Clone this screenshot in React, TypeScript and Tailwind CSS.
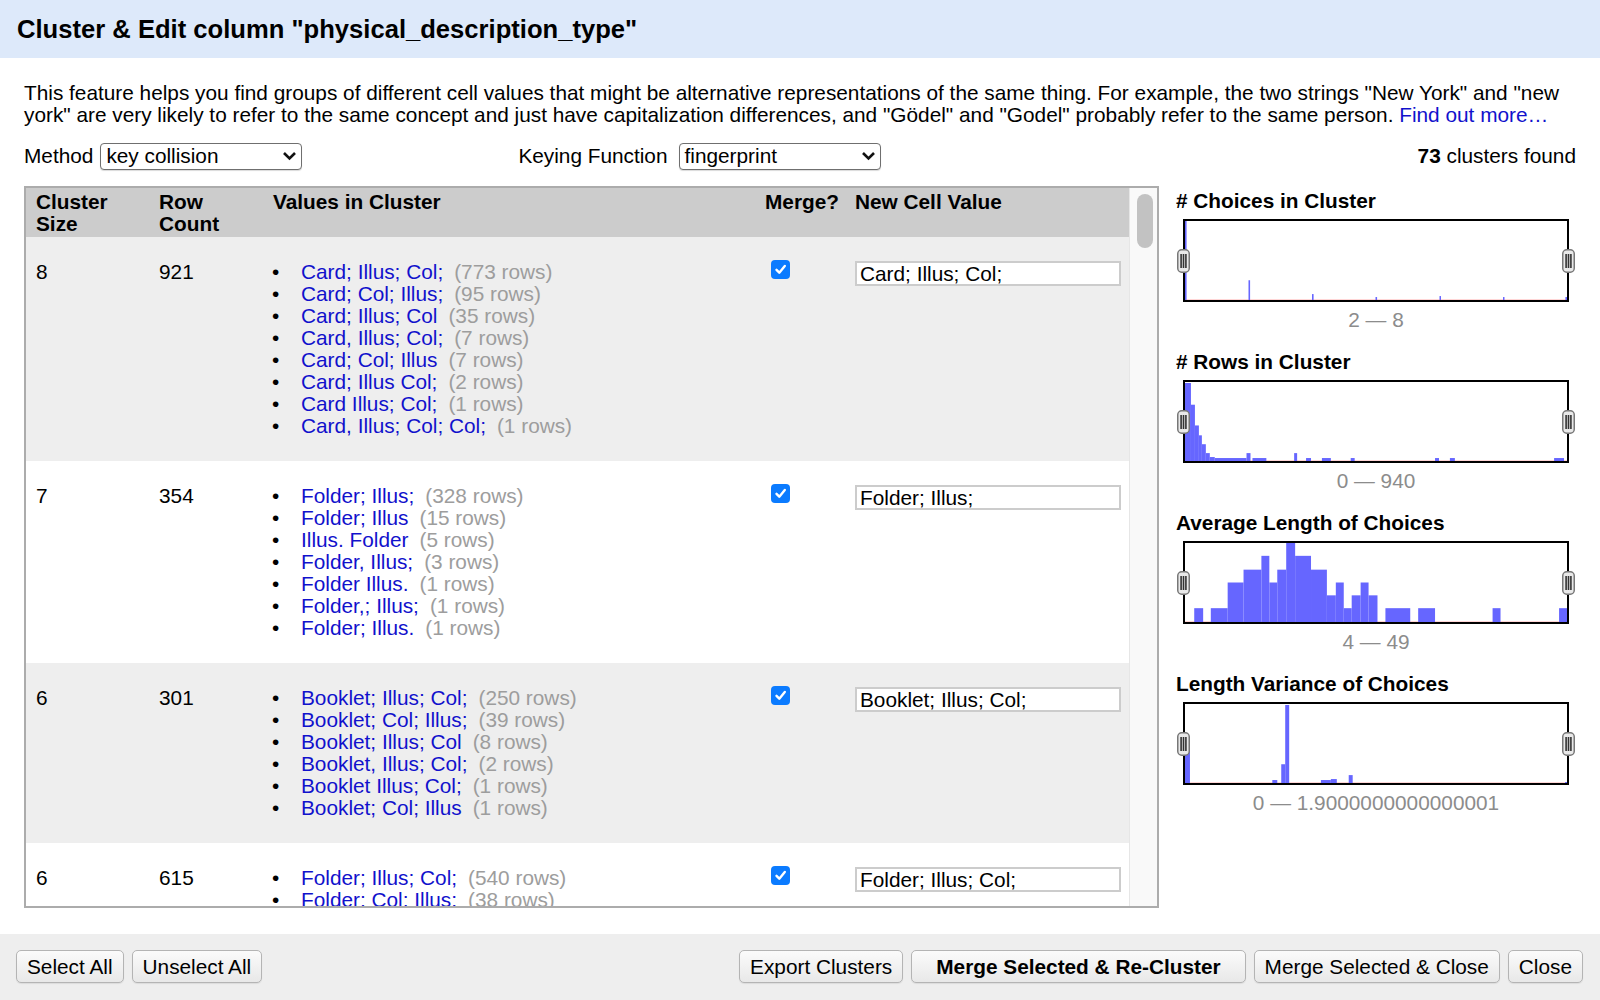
import React from "react";

type Item = [string, number];
type Cluster = { size: number; count: number; items: Item[]; value: string };

const clusters: Cluster[] = [
  {
    size: 8,
    count: 921,
    value: "Card; Illus; Col;",
    items: [
      ["Card; Illus; Col;", 773],
      ["Card; Col; Illus;", 95],
      ["Card; Illus; Col", 35],
      ["Card, Illus; Col;", 7],
      ["Card; Col; Illus", 7],
      ["Card; Illus Col;", 2],
      ["Card Illus; Col;", 1],
      ["Card, Illus; Col; Col;", 1],
    ],
  },
  {
    size: 7,
    count: 354,
    value: "Folder; Illus;",
    items: [
      ["Folder; Illus;", 328],
      ["Folder; Illus", 15],
      ["Illus. Folder", 5],
      ["Folder, Illus;", 3],
      ["Folder Illus.", 1],
      ["Folder,; Illus;", 1],
      ["Folder; Illus.", 1],
    ],
  },
  {
    size: 6,
    count: 301,
    value: "Booklet; Illus; Col;",
    items: [
      ["Booklet; Illus; Col;", 250],
      ["Booklet; Col; Illus;", 39],
      ["Booklet; Illus; Col", 8],
      ["Booklet, Illus; Col;", 2],
      ["Booklet Illus; Col;", 1],
      ["Booklet; Col; Illus", 1],
    ],
  },
  {
    size: 6,
    count: 615,
    value: "Folder; Illus; Col;",
    items: [
      ["Folder; Illus; Col;", 540],
      ["Folder; Col; Illus;", 38],
      ["Folder; Illus; Col", 20],
      ["Folder, Illus; Col;", 10],
      ["Folder; Col; Illus", 4],
      ["Folder Illus; Col;", 3],
    ],
  },
];

// bars: [x0, x1, height] in a 385 x 80 box
const charts: { title: string; range: string; bars: number[][] }[] = [
  {
    title: "# Choices in Cluster",
    range: "2 — 8",
    bars: [
      [0, 1.6, 80],
      [64, 65.6, 20],
      [128, 129.6, 6],
      [192, 193.6, 3],
      [256.5, 258, 4],
      [320.5, 322, 3],
      [383.4, 385, 3],
    ],
  },
  {
    title: "# Rows in Cluster",
    range: "0 — 940",
    bars: [
      [0, 6, 79],
      [6, 10, 57],
      [10, 14, 36],
      [14, 17, 26],
      [17, 21, 17],
      [21, 25, 8],
      [25, 30, 4],
      [30, 62, 3],
      [62, 66, 8],
      [68, 82, 3],
      [110, 113, 8],
      [122, 127, 3],
      [138, 147, 3],
      [167, 171, 3],
      [252, 256, 3],
      [267, 272, 3],
      [372, 382, 3],
    ],
  },
  {
    title: "Average Length of Choices",
    range: "4 — 49",
    bars: [
      [9.3, 18.3, 14],
      [26, 43, 14],
      [43, 59, 40],
      [59, 77, 53],
      [77, 85, 67],
      [85, 93, 40],
      [93, 102, 53],
      [102, 111, 80],
      [111, 127, 67],
      [127, 143, 53],
      [143, 152, 27],
      [152, 160, 40],
      [160, 168, 14],
      [168, 177, 27],
      [177, 185, 40],
      [185, 194, 27],
      [202, 227, 14],
      [235, 252, 14],
      [310, 318, 14],
      [377, 385, 14],
    ],
  },
  {
    title: "Length Variance of Choices",
    range: "0 — 1.9000000000000001",
    bars: [
      [0, 5, 33],
      [88, 93, 3],
      [97, 101, 19],
      [101, 105, 79],
      [137, 147, 3],
      [147, 153, 4],
      [165, 169, 8],
      [383, 385, 1],
    ],
  },
];

const Chevron = () => (
  <svg width="15" height="10" viewBox="0 0 15 10">
    <path d="M2 2l5.5 5.5L13 2" fill="none" stroke="#111" strokeWidth="2.6" />
  </svg>
);

const FakeSelect: React.FC<{ value: string }> = ({ value }) => (
  <div className="flex h-[27px] w-[202px] items-center justify-between rounded-[4px] border border-[#6f6f6f] bg-white pl-[5px] pr-[4px] shadow-[0_1px_1px_rgba(0,0,0,0.15)]">
    <span>{value}</span>
    <Chevron />
  </div>
);

const Checkbox = () => (
  <div className="flex h-[19px] w-[19px] items-center justify-center rounded-[4px] bg-[#0b7bff]">
    <svg width="13" height="13" viewBox="0 0 13 13">
      <path d="M2.5 6.8l2.8 2.9L10.8 3" fill="none" stroke="#fff" strokeWidth="2.4" strokeLinecap="round" strokeLinejoin="round" />
    </svg>
  </div>
);

const Handle = () => (
  <svg width="13" height="24" viewBox="0 0 13 24">
    <rect x="0.75" y="0.75" width="11.5" height="22.5" rx="4" fill="#e9e9e9" stroke="#777" strokeWidth="1.5" />
    <rect x="3.3" y="5" width="1.6" height="14" fill="#333" />
    <rect x="5.7" y="5" width="1.6" height="14" fill="#333" />
    <rect x="8.1" y="5" width="1.6" height="14" fill="#333" />
  </svg>
);

const Histogram: React.FC<{ bars: number[][] }> = ({ bars }) => (
  <div className="relative h-[83px] w-[386px] border-2 border-black bg-white">
    <svg width="382" height="79" viewBox="0 0 385 80" preserveAspectRatio="none" className="block">
      <rect x="0" y="79" width="385" height="1" fill="#ffd6d6" />
      {bars.map(([x0, x1, h], i) => (
        <rect key={i} x={x0} y={80 - h} width={x1 - x0} height={h} fill="#6666ff" />
      ))}
    </svg>
    <div className="absolute left-[-8px] top-[28px]">
      <Handle />
    </div>
    <div className="absolute right-[-8px] top-[28px]">
      <Handle />
    </div>
  </div>
);

const Button: React.FC<{ children: React.ReactNode; bold?: boolean }> = ({ children, bold }) => (
  <button
    className={`h-[33px] rounded-[5px] border border-[#b4b4b4] bg-[linear-gradient(#fbfbfb,#e8e8e8)] text-[20.8px] leading-[22px] text-black shadow-[0_1px_1px_rgba(0,0,0,0.08)] ${
      bold ? "px-[24px] font-bold" : "px-[10px]"
    }`}
  >
    {children}
  </button>
);

const cols = "grid grid-cols-[123px_114px_492px_90px_284px]";

export default function App() {
  return (
    <div className="flex h-[1000px] w-[1600px] flex-col overflow-hidden bg-white font-['Liberation_Sans',Arial,sans-serif] text-[20.8px] leading-[22px] text-black">
      <div className="flex h-[58px] shrink-0 items-center bg-[#dde9fa] pl-[17px]">
        <h1 className="text-[25.6px] font-bold leading-[28px]">Cluster &amp; Edit column "physical_description_type"</h1>
      </div>

      <div className="flex flex-1 flex-col px-6 pt-6">
        <p>
          This feature helps you find groups of different cell values that might be alternative representations of the same thing. For example, the two strings "New York" and "new york" are very likely to refer to the same concept and just have capitalization differences, and "Gödel" and "Godel" probably refer to the same person.{" "}
          <span className="text-[#1111cc]">Find out more…</span>
        </p>

        <div className="mt-[16px] flex h-[28px] items-center">
          <span className="mr-[7px]">Method</span>
          <FakeSelect value="key collision" />
          <span className="ml-[216px] mr-[11px]">Keying Function</span>
          <FakeSelect value="fingerprint" />
          <span className="ml-auto">
            <b>73</b> clusters found
          </span>
        </div>

        <div className="mt-[16px] flex">
          <div className="flex h-[722px] w-[1135px] border-2 border-[#acacac]">
            <div className="w-[1103px] overflow-hidden">
              <div className={`${cols} h-[49px] bg-[#cccccc] pt-[3px] font-bold`}>
                <div className="pl-[10px]">Cluster<br />Size</div>
                <div className="pl-[10px]">Row<br />Count</div>
                <div className="pl-[10px]">Values in Cluster</div>
                <div className="pl-[10px]">Merge?</div>
                <div className="pl-[10px]">New Cell Value</div>
              </div>
              {clusters.map((c, i) => (
                <div key={i} className={`${cols} py-6 ${i % 2 === 0 ? "bg-[#eeeeee]" : "bg-white"}`}>
                  <div className="pl-[10px]">{c.size}</div>
                  <div className="pl-[10px]">{c.count}</div>
                  <div className="pl-[10px]">
                    {c.items.map(([v, n], j) => (
                      <div key={j} className="flex">
                        <span className="w-[28px] -translate-x-[1px]">•</span>
                        <span className="text-[#1111cc]">{v}</span>
                        <span className="ml-[11px] text-[#9d9d9d]">({n} rows)</span>
                      </div>
                    ))}
                  </div>
                  <div className="-mt-[1px] pl-[16px]">
                    <Checkbox />
                  </div>
                  <div className="pl-[10px] pr-[8px]">
                    <div className="h-[25px] border-2 border-[#cccccc] bg-white pl-[3px] leading-[21px]">{c.value}</div>
                  </div>
                </div>
              ))}
            </div>
            <div className="flex-1 border-l border-[#e6e6e6] bg-[#f9f9f9] pl-[7px] pt-[6px]">
              <div className="h-[54px] w-[16px] rounded-full bg-[#c2c2c2]" />
            </div>
          </div>

          <div className="ml-[17px] flex flex-col pt-[4px]">
            {charts.map((ch, i) => (
              <div key={i} className="flex flex-col pb-[20px]">
                <div className="font-bold">{ch.title}</div>
                <div className="ml-[7px] mt-[7px]">
                  <Histogram bars={ch.bars} />
                </div>
                <div className="ml-[7px] mt-[7px] w-[386px] text-center text-[#8c8c8c]">{ch.range}</div>
              </div>
            ))}
          </div>
        </div>
      </div>

      <div className="flex h-[66px] shrink-0 items-start justify-between bg-[#eeeeee] pl-4 pr-[17px] pt-[16px]">
        <div className="flex gap-2">
          <Button>Select All</Button>
          <Button>Unselect All</Button>
        </div>
        <div className="flex gap-2">
          <Button>Export Clusters</Button>
          <Button bold>Merge Selected &amp; Re-Cluster</Button>
          <Button>Merge Selected &amp; Close</Button>
          <Button>Close</Button>
        </div>
      </div>
    </div>
  );
}
